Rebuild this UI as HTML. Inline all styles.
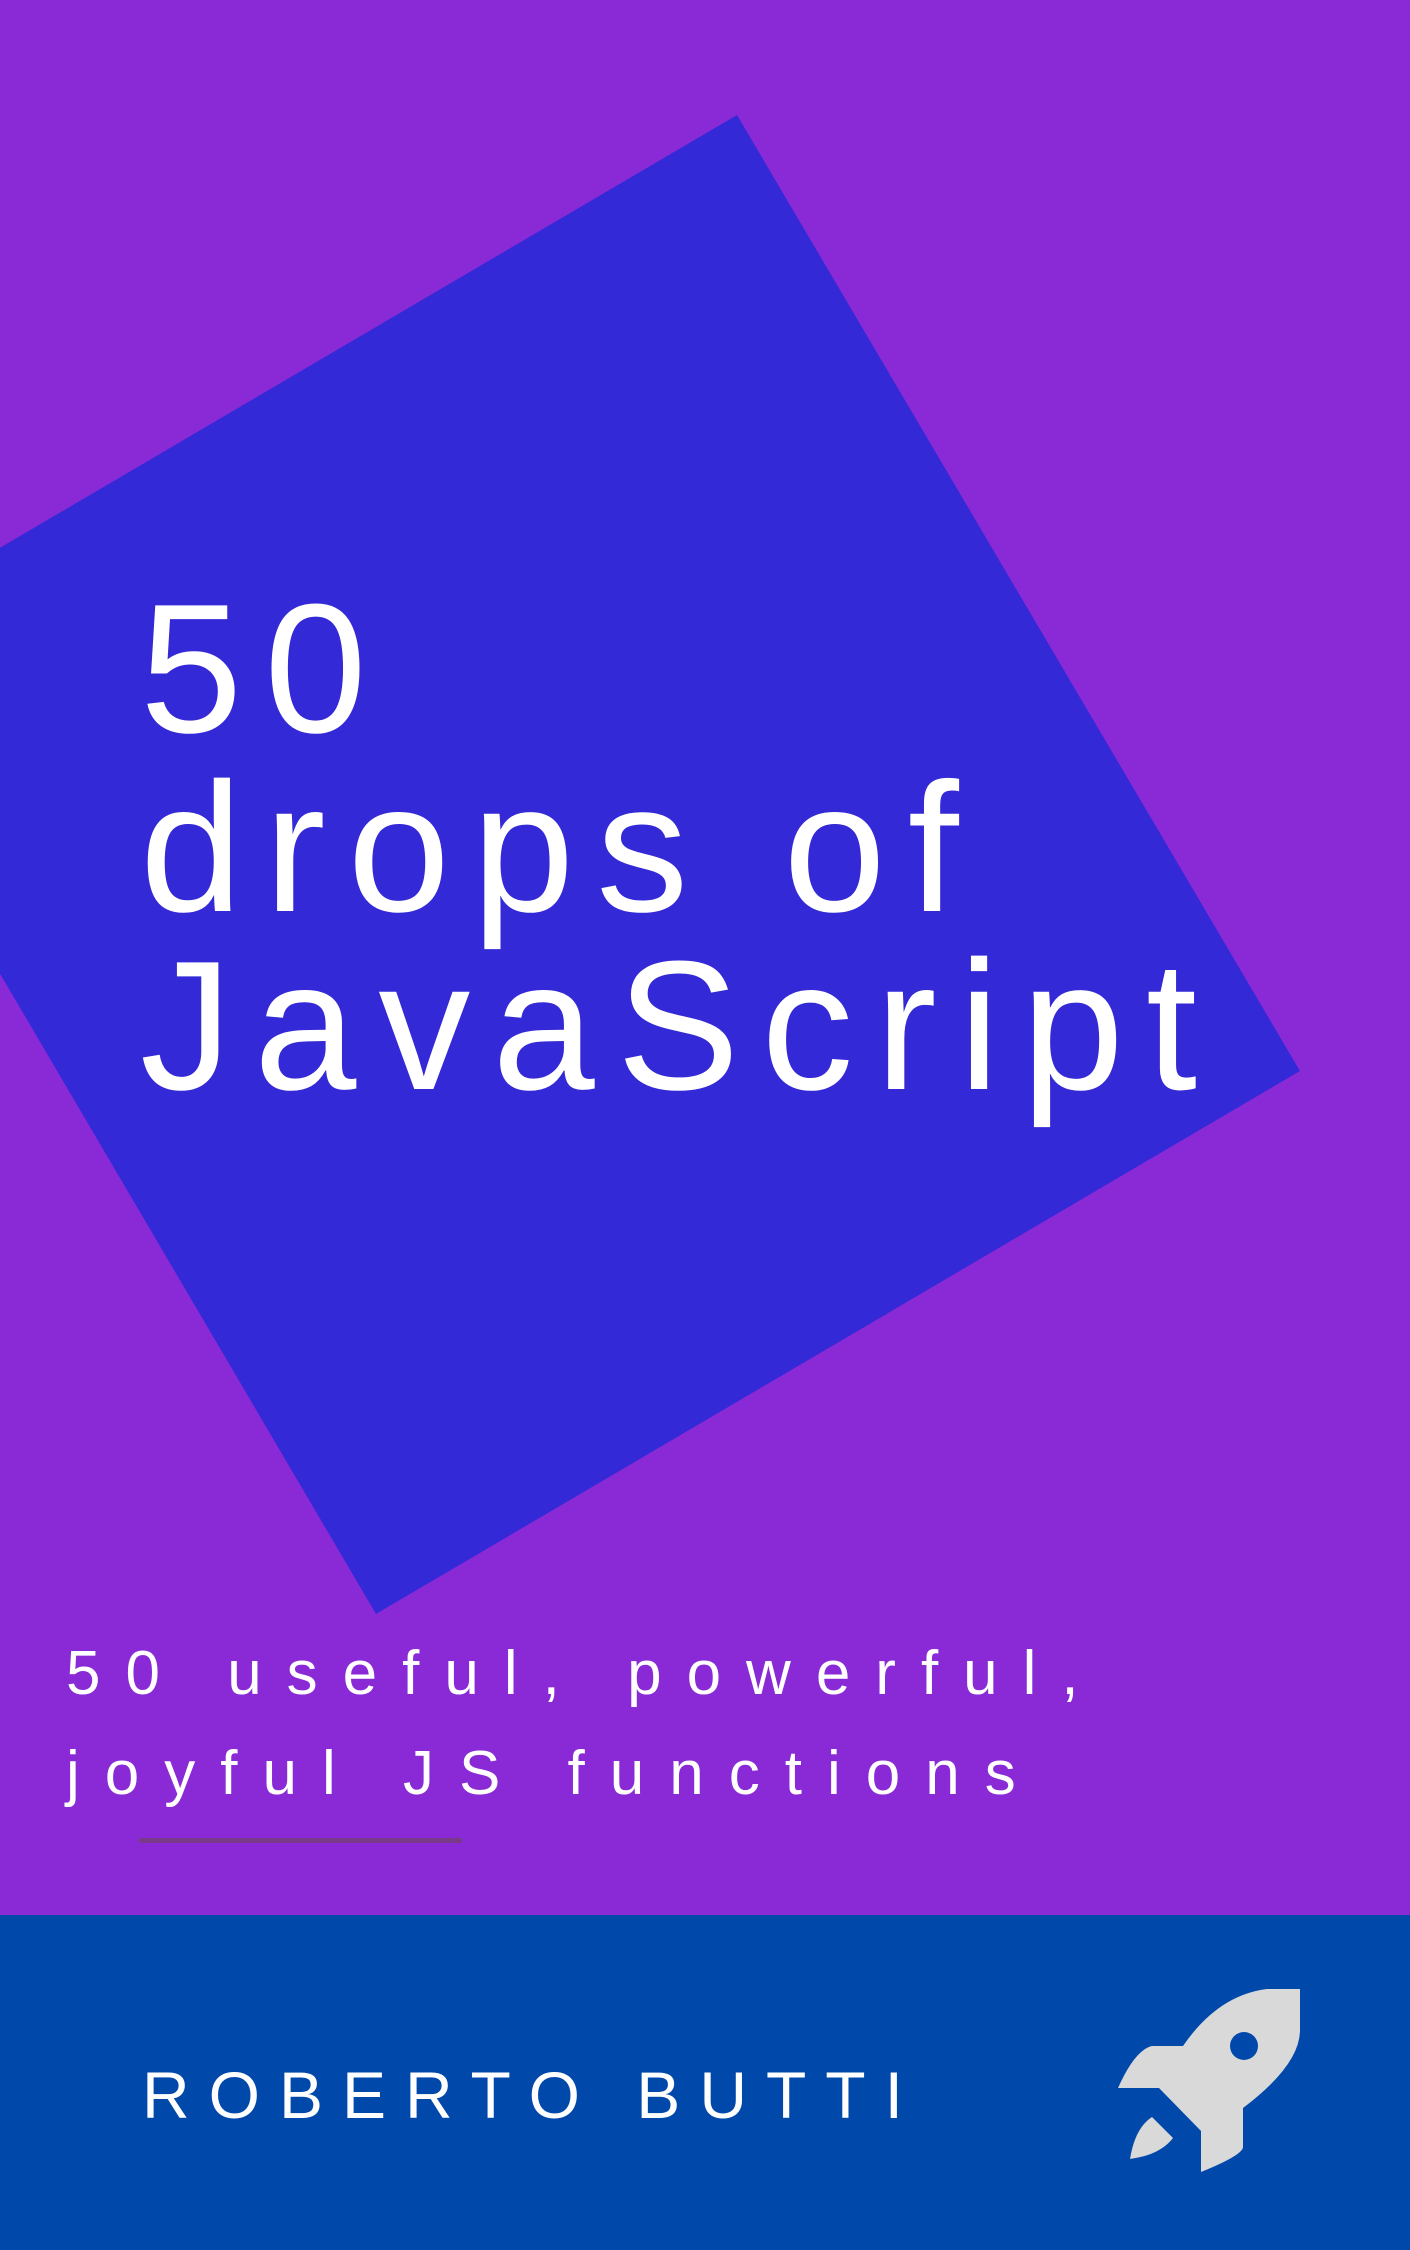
<!DOCTYPE html>
<html><head><meta charset="utf-8"><style>
html,body{margin:0;padding:0}
body{width:1410px;height:2250px;position:relative;overflow:hidden;background:#8a2ad6;font-family:"Liberation Sans",sans-serif;color:#fff}
.t{position:absolute;left:140px;font-size:184px;letter-spacing:22px;line-height:1;white-space:nowrap}
.s{position:absolute;left:66px;font-size:62px;letter-spacing:25px;line-height:1;white-space:nowrap}
.bar{position:absolute;left:0;top:1915px;width:1410px;height:335px;background:#0049ab}
.a{position:absolute;left:142px;top:2062px;font-size:66px;letter-spacing:19px;line-height:1;white-space:nowrap}
</style></head><body>
<svg width="1410" height="2250" style="position:absolute;left:0;top:0">
<polygon points="737,115 1300,1071 376,1614 -186,657" fill="#3429d6"/>
<rect x="139" y="1838" width="323" height="5" fill="#7a3a8a"/>
</svg>
<div class="t" style="top:576px">50</div>
<div class="t" style="top:755px">drops of</div>
<div class="t" style="top:933px">JavaScript</div>
<div class="s" style="top:1643px">50 useful, powerful,</div>
<div class="s" style="top:1743px">joyful JS functions</div>
<div class="bar"></div>
<div class="a">ROBERTO BUTTI</div>
<svg width="1410" height="2250" style="position:absolute;left:0;top:0">
<path fill="#d9d9d9" d="M1300,1989 L1267,1989 Q1218,1995 1183,2046 L1152,2046 Q1135,2050 1118,2088 L1159,2088 L1201,2131 L1201,2172 Q1243,2155 1243,2147 L1243,2108 Q1300,2065 1300,2030 Z"/>
<circle cx="1244" cy="2046" r="14" fill="#0049ab"/>
<path fill="#d9d9d9" d="M1152,2117 L1173,2138 Q1160,2155 1130,2159 Q1135,2128 1152,2117 Z"/>
</svg>
</body></html>
